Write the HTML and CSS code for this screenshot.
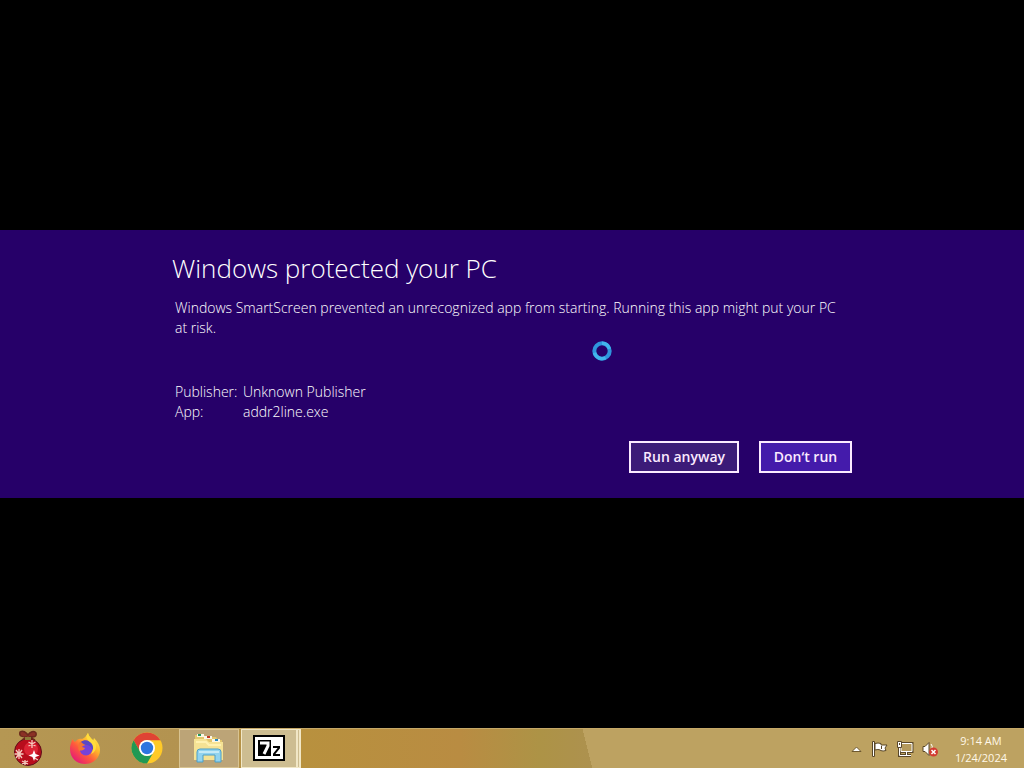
FILE: index.html
```html
<!DOCTYPE html>
<html lang="en">
<head>
    <meta charset="UTF-8">
    <meta name="viewport" content="width=device-width, initial-scale=1.0">
    <title>Windows SmartScreen</title>
    <link rel="stylesheet" href="styles.css">
</head>
<body>

    <main class="screen">
        <section class="banner">
            <div class="dialog">
                <h1>Windows protected your PC</h1>
                <p class="message">Windows SmartScreen prevented an unrecognized app from starting. Running this app might put your PC at risk.</p>
                <dl class="details">
                    <dt>Publisher:</dt>
                    <dd>Unknown Publisher</dd>
                    <dt>App:</dt>
                    <dd>addr2line.exe</dd>
                </dl>
                <div class="actions">
                    <button type="button" class="btn">Run anyway</button>
                    <button type="button" class="btn btn-default">Don‘t run</button>
                </div>
            </div>
            <!-- busy cursor -->
            <svg class="cursor" viewBox="0 0 20 20" aria-hidden="true">
                <circle cx="10" cy="10" r="7.7" fill="none" stroke="#2f95dc" stroke-width="4"/>
                <path d="M10 2.3a7.7 7.7 0 0 1 7.4 5.6M2.5 11.7a7.7 7.7 0 0 0 11 5" fill="none" stroke="#42b4ec" stroke-width="3.4"/>
            </svg>
        </section>
    </main>

    <footer class="taskbar">
        <button type="button" class="task" aria-label="Start">
            <svg width="32" height="38" viewBox="0 0 32 38">
                <circle cx="16" cy="23" r="13.5" fill="#b80d1c" stroke="#5d101a"/>
                <circle cx="19" cy="20" r="7" fill="#dc2434"/>
                <path d="M7 20v10M2.500 25h9M4 21l6 8M10 21l-6 8M20 11v8M16.500 13l7 4M23.500 13l-7 4M13 31v5M10 32l6 3M16 32l-6 3M26 31l-5-3" stroke="#f4c9bd" stroke-width="1.300" fill="none"/>
                <path d="M22 21l1.500 4 4 1.500-4 1.500-1.500 4-1.500-4-4-1.500 4-1.500z" fill="#fff"/>
                <path d="M15 8C9 8 7 7 8 3c3-2 6 0 8 3 2-3 6-5 8-2 1 4-2 4-7 4l6 3M15 8l-5 3" fill="#8b3025" stroke="#6b2a1c" stroke-width="1.500"/>
                <path d="M13 8h6v3h-6z" fill="#8d7b38"/>
            </svg>
        </button>
        <button type="button" class="task" aria-label="Firefox">
            <svg width="32" height="32" viewBox="0 0 32 32">
                <defs>
                    <linearGradient id="fox" x1=".9" y1=".1" x2=".2" y2=".9">
                        <stop offset="0" stop-color="#fff047"/>
                        <stop offset=".35" stop-color="#ffb32b"/>
                        <stop offset=".65" stop-color="#ff5b3b"/>
                        <stop offset="1" stop-color="#e81f72"/>
                    </linearGradient>
                </defs>
                <path d="M19 1c1 4 3 4 5 8l1-3c4 4 6 8 6 12 0 8-7 14-15 14S1 26 1 17c0-5 2-7 2-10l3 3c2-3 5-4 7-3 3-1 4-3 6-6z" fill="url(#fox)"/>
                <circle cx="17" cy="17" r="6.500" fill="#7542d8"/>
                <path d="M10 11c3-3 8-3 11-1l-3 1c-1 3-4 2-5 4l3 1c-1 3-4 2-6 3-1-3-1-6 0-8z" fill="#f47532"/>
                <path d="M12 10c3-3 8-2 11 1 2 3 2 6 1 8-1-4-4-6-7-6-1 0-3-1-5-3z" fill="#5948c4"/>
                <path d="M19 1c-3 4-1 7 2 9 4 3 4 8 1 12 7-3 6-11 2-14-2-2-4-3-5-7z" fill="#ffdc3c"/>
            </svg>
        </button>
        <button type="button" class="task" aria-label="Chrome">
            <svg width="32" height="32" viewBox="0 0 32 32">
                <circle cx="16" cy="16" r="15.500" fill="#ffca28"/>
                <path d="M2.600 8.200A15.500 15.500 0 0 1 29.400 8.200H16a7.800 7.800 0 0 0-6.800 11.700z" fill="#df4334"/>
                <path d="M2.600 8.200a15.500 15.500 0 0 0 13.400 23.300l6.800-11.700a7.800 7.800 0 0 1-13.600 0z" fill="#219954"/>
                <circle cx="16" cy="16" r="8" fill="#fff"/>
                <circle cx="16" cy="16" r="6.200" fill="#2d75df"/>
            </svg>
        </button>
        <button type="button" class="task task-open" aria-label="File Explorer">
            <svg width="32" height="32" viewBox="0 0 32 32">
                <path d="M2 3h9l2 2h10l2 3h4v20H2z" fill="#e3c66c"/>
                <path d="M4 2h7v3H4zM11 4h8v3h-8zM19 7h8v3h-8z" fill="#faf5e6"/>
                <path d="M5 2h3v2H5z" fill="#23985c"/>
                <path d="M14 4h3v2h-3z" fill="#c43925"/>
                <path d="M22 7h3v2h-3z" fill="#2788bf"/>
                <path d="M1 7h12l3 3h14v18H1z" fill="#f5e294"/>
                <path d="M3 10h10l3 3h12" fill="none" stroke="#fff1b0" stroke-width="2"/>
                <path d="M4 30V20q0-3 3-3h18q3 0 3 3v10h-6v-7H10v7z" fill="#91d3ef" stroke="#4d9fc6"/>
                <path d="M6 20h20" stroke="#c5eaf6" stroke-width="2"/>
            </svg>
        </button>
        <button type="button" class="task task-active" aria-label="7-Zip">
            <svg width="32" height="26" viewBox="0 0 32 26">
                <path d="M1 1h30v24H1z" fill="#fff" stroke="#000" stroke-width="2"/>
                <path d="M5 5h13v16H5z"/>
                <path d="M7 8h8v3l-4 8" fill="none" stroke="#fff" stroke-width="3"/>
                <path d="M20 12h6v1l-5 6v1h6" fill="none" stroke="#000" stroke-width="2"/>
            </svg>
        </button>

        <div class="tray">
            <button type="button" class="tray-icon" aria-label="Show hidden icons">
                <svg width="16" height="16" viewBox="0 0 16 16">
                    <path d="M4 10.500l4.500-4.500 4.500 4.500z" fill="#fff" stroke="#6e592f"/>
                </svg>
            </button>
            <button type="button" class="tray-icon" aria-label="Action Center">
                <svg width="16" height="16" viewBox="0 0 16 16">
                    <path d="M3 2.500q3-1 6 0v1.500h6l-2 3 1 2.500q-3 1-5.500 0V9Q6 8 3 9z" fill="#fff" stroke="#594728"/>
                    <path d="M.5 .5h2v15h-2z" fill="#fff" stroke="#594728"/>
                    <path d="M9.500 5v3" stroke="#594728"/>
                </svg>
            </button>
            <button type="button" class="tray-icon" aria-label="Network">
                <svg width="18" height="16" viewBox="0 0 18 16">
                    <path d="M5 2.500h11v8H5zM10.500 11v3M6 14.500h9M3.500 6v8.500h3" fill="none" stroke="#594728" stroke-width="3"/>
                    <path d="M5 2.500h11v8H5z" fill="#b59a5c" stroke="#fff"/>
                    <path d="M10.500 11v3M6 14.500h9M3.500 6v8.500h3" fill="none" stroke="#fff"/>
                    <path d="M1.500 .5h4v6h-4z" fill="#fff" stroke="#594728"/>
                    <path d="M3 2h1v2H3z" fill="#594728"/>
                </svg>
            </button>
            <button type="button" class="tray-icon" aria-label="Volume muted">
                <svg width="16" height="16" viewBox="0 0 16 16">
                    <path d="M1 5.500h2l4-4v13l-4-4H1z" fill="#fff" stroke="#594728"/>
                    <path d="M9 3q2 2 1 5" fill="none" stroke="#fff"/>
                    <circle cx="11.500" cy="11" r="4.500" fill="#d23b31"/>
                    <path d="M9.500 9l4 4M13.500 9l-4 4" stroke="#fff" stroke-width="1.500"/>
                </svg>
            </button>
            <button type="button" class="clock">
                <span>9:14 AM</span>
                <span>1/24/2024</span>
            </button>
        </div>
    </footer>

</body>
</html>
```
FILE: styles.css
```css
* { box-sizing: border-box; }
body { margin: 0; min-height: 100vh; display: flex; flex-direction: column; background: #000; color: #fff; font-family: "Segoe UI", "Open Sans", "Noto Sans", sans-serif; }
button { font-family: inherit; color: inherit; border: none; background: none; padding: 0; cursor: pointer; }
svg { display: block; }

.screen { flex: 1; display: flex; flex-direction: column; justify-content: center; }
.banner { position: relative; background: #260069; padding: 20px 24px 25px; }
.dialog { max-width: 680px; margin: 0 auto; }
h1 { margin: 0 0 12px; font-size: 26px; line-height: 36px; font-weight: 300; }
.message { margin: 0 3px; font-size: 14px; line-height: 20px; font-weight: 300; }
.details { display: grid; grid-template-columns: 60px 1fr; column-gap: 8px; margin: 44px 3px 19px; font-size: 14px; line-height: 20px; font-weight: 300; }
.details dd { margin: 0; }
.actions { display: flex; justify-content: flex-end; gap: 20px; }
.btn { min-width: 93px; height: 32px; padding: 0 12px; border: 2px solid #fbeaff; background: #3c1b78; color: #fbeaff; font-size: 14px; line-height: 20px; font-weight: 600; }
.btn-default { background: #441bab; }
.cursor { position: absolute; left: 592px; top: 111px; width: 20px; height: 20px; }

.taskbar { display: flex; height: 40px; padding-left: 1px; border-top: 1px solid #c5a868; background: linear-gradient(76deg, transparent 57.3%, #bda261 57.3%), linear-gradient(90deg, #b59753 0, #b39350 180px, #b8913e 300px, #b98c42 460px, #ad9346 540px, #ad9150 600px); }
.task { width: 60px; margin-right: 2px; padding-bottom: 1px; display: flex; align-items: center; justify-content: center; flex-shrink: 0; }
.task:first-child { width: 54px; margin-right: 0; }
.task-open { border: 1px solid #d8c391; background: #bca477; }
.task-active { border: 1px solid #f1e7c6; background: #cdbd91; border-right: 5px double #f1e7c6; }
.tray { margin-left: auto; display: flex; align-items: center; gap: 8px; padding-right: 17px; }
.tray-icon { display: flex; }
.clock { margin-left: 9px; display: flex; flex-direction: column; align-items: center; color: #fff8e8; font-size: 11px; line-height: 17px; }
```
